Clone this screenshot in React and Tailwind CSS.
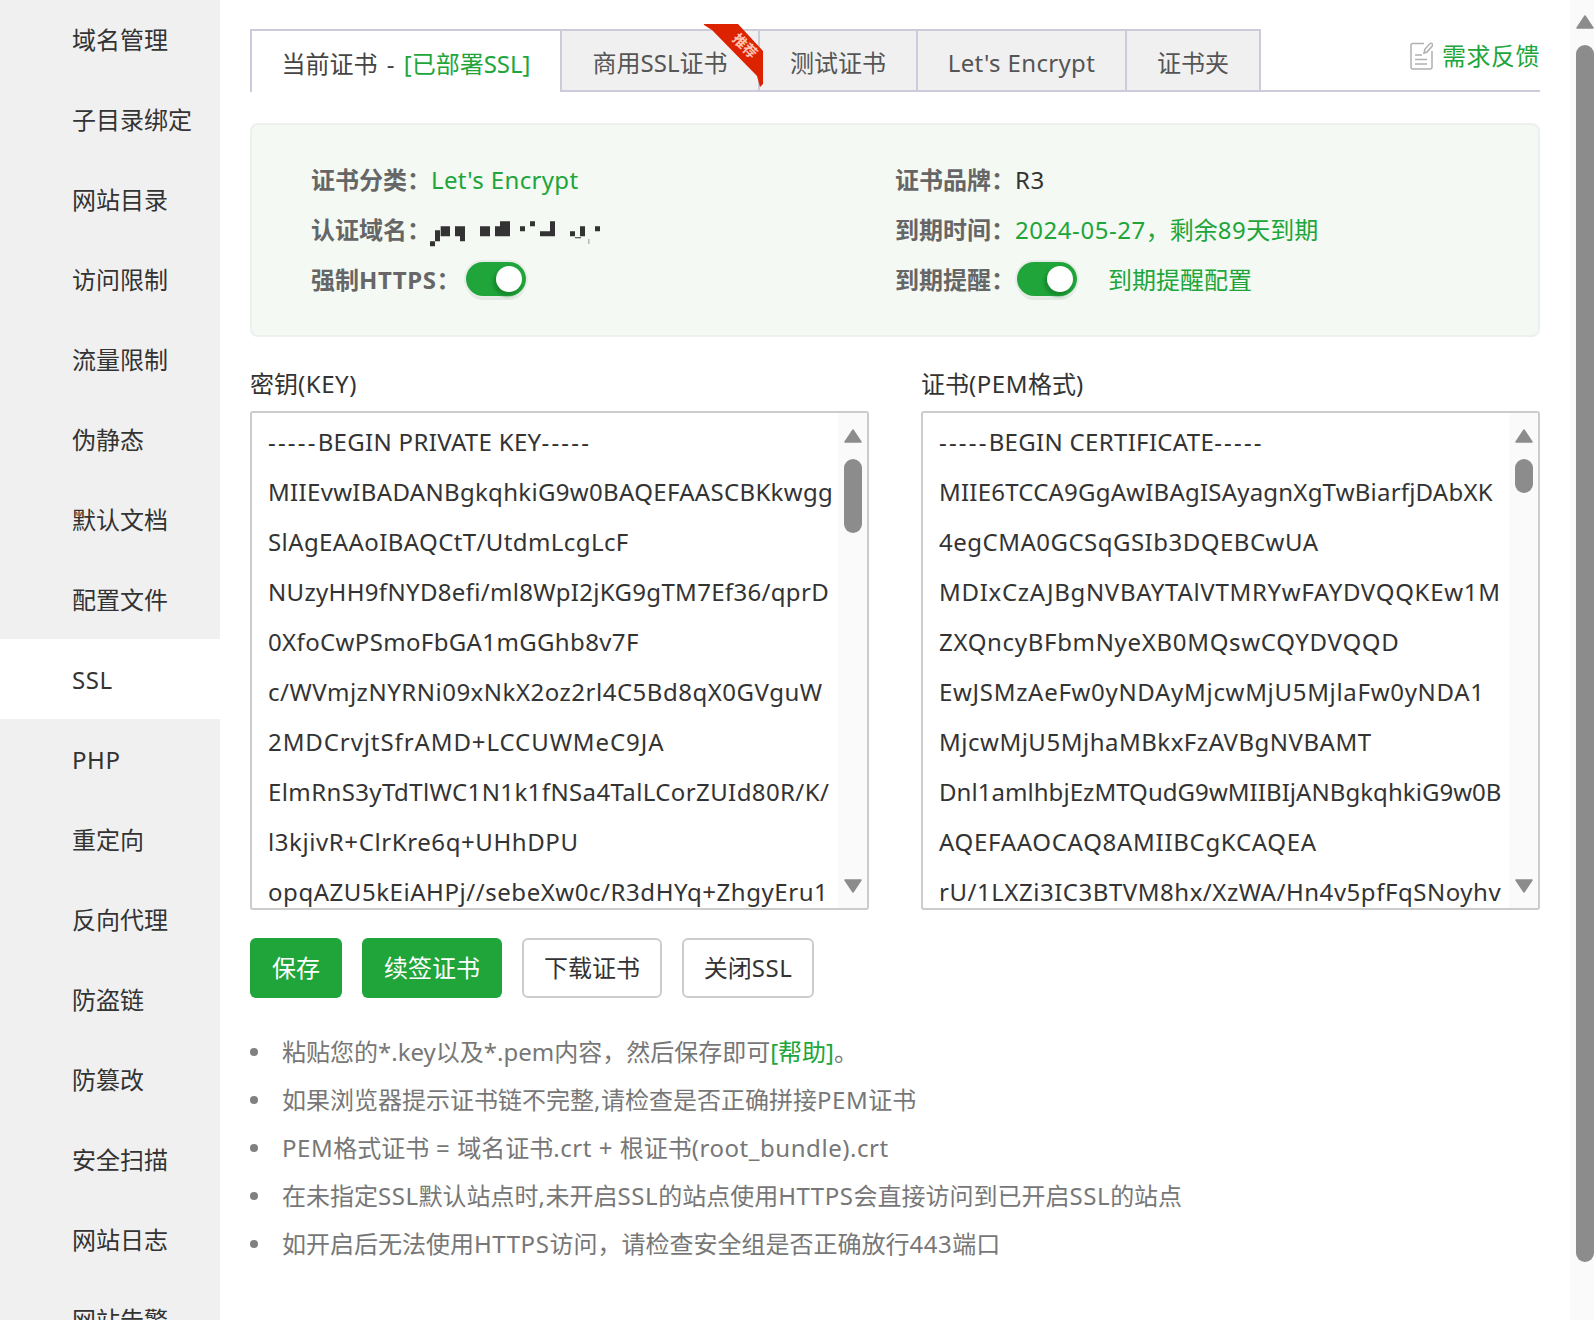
import React from "react";

const side = ["域名管理","子目录绑定","网站目录","访问限制","流量限制","伪静态","默认文档","配置文件","SSL","PHP","重定向","反向代理","防盗链","防篡改","安全扫描","网站日志","网站告警"];
// Each line has its own tracking: the reference's font differs from Noto Sans by glyph, so line widths drift.
const keyLines = [
  ["-----BEGIN PRIVATE KEY-----","tracking-[0.32px]"],
  ["MIIEvwIBADANBgkqhkiG9w0BAQEFAASCBKkwgg","tracking-[0.32px]"],
  ["SlAgEAAoIBAQCtT/UtdmLcgLcF","tracking-[0.4px]"],
  ["NUzyHH9fNYD8efi/ml8WpI2jKG9gTM7Ef36/qprD","tracking-[0.32px]"],
  ["0XfoCwPSmoFbGA1mGGhb8v7F","tracking-[0.36px]"],
  ["c/WVmjzNYRNi09xNkX2oz2rl4C5Bd8qX0GVguW","tracking-[0.51px]"],
  ["2MDCrvjtSfrAMD+LCCUWMeC9JA","tracking-[0.91px]"],
  ["ElmRnS3yTdTlWC1N1k1fNSa4TalLCorZUId80R/K/","tracking-[0.39px]"],
  ["l3kjivR+ClrKre6q+UHhDPU","tracking-[0.59px]"],
  ["opqAZU5kEiAHPj//sebeXw0c/R3dHYq+ZhgyEru1","tracking-[0.55px]"],
];
const pemLines = [
  ["-----BEGIN CERTIFICATE-----","tracking-[0.32px]"],
  ["MIIE6TCCA9GgAwIBAgISAyagnXgTwBiarfjDAbXK","tracking-[0.21px]"],
  ["4egCMA0GCSqGSIb3DQEBCwUA","tracking-[0.49px]"],
  ["MDIxCzAJBgNVBAYTAlVTMRYwFAYDVQQKEw1M","tracking-[0.69px]"],
  ["ZXQncyBFbmNyeXB0MQswCQYDVQQD","tracking-[0.68px]"],
  ["EwJSMzAeFw0yNDAyMjcwMjU5MjlaFw0yNDA1","tracking-[0.69px]"],
  ["MjcwMjU5MjhaMBkxFzAVBgNVBAMT","tracking-[0.51px]"],
  ["Dnl1amlhbjEzMTQudG9wMIIBIjANBgkqhkiG9w0B","tracking-[0.05px]"],
  ["AQEFAAOCAQ8AMIIBCgKCAQEA","tracking-[0.7px]"],
  ["rU/1LXZi3IC3BTVM8hx/XzWA/Hn4v5pfFqSNoyhv","tracking-[0.53px]"],
];

// Latin runs in the reference's font are a little wider than in Noto Sans.
function T({ children }) {
  return children.split(/([\x20-\x7e]+)/).map((part, i) =>
    i % 2 ? <span key={i} className="tracking-[0.55px]">{part}</span> : part
  );
}

function Line({ text, track }) {
  const m = text.match(/^(-----)(.*?)(-----)$/);
  if (!m) return <div className={track}>{text}</div>;
  return (
    <div className={track}>
      <span className="tracking-[2.2px]">{m[1]}</span>
      {m[2]}
      <span className="tracking-[2.2px]">{m[3]}</span>
    </div>
  );
}

function Arrow({ down }) {
  return (
    <svg width="18" height="14" viewBox="0 0 18 14" className="shrink-0">
      <path d={down ? "M1 1H17L9 13Z" : "M9 1L17 13H1Z"} fill="#8c8c8c" stroke="#8c8c8c" strokeWidth="1.5" strokeLinejoin="round" />
    </svg>
  );
}

function Toggle() {
  return (
    <div className="relative mb-[2px] flex h-[34px] w-[60px] shrink-0 items-center justify-end rounded-full bg-[#20a53a] pr-[4px] shadow-[0_0_0_2px_#e8ece8,0_4px_0_0_#e4e8e4]">
      <div className="h-[26px] w-[26px] rounded-full bg-white shadow-[-2px_3px_3px_1px_#188a2e]" />
    </div>
  );
}

function Box({ lines, thumb }) {
  return (
    <div className="flex h-[499px] w-[619px] overflow-hidden rounded-[3px] border-2 border-[#cccccc]">
      <div className="min-w-0 flex-1 overflow-hidden whitespace-nowrap pl-[16px] pt-[4px] text-[24px] leading-[50px] text-[#333333]">
        {lines.map(([l, track]) => <Line key={l} text={l} track={track} />)}
      </div>
      <div className="flex w-[29px] shrink-0 flex-col items-center bg-[#fafafa] pb-[15px] pt-[16px]">
        <Arrow />
        <div className={`mt-[16px] w-[18px] rounded-full bg-[#8c8c8c] ${thumb}`} />
        <div className="mt-auto"><Arrow down /></div>
      </div>
    </div>
  );
}

function Label({ children }) {
  return <span className="w-[120px] shrink-0 font-bold text-[#666666]">{children}</span>;
}

function Dot({ children }) {
  return (
    <li className="flex h-[48px] items-center gap-[24px]">
      <span className="h-[8px] w-[8px] shrink-0 rounded-full bg-[#808080]" />
      <span>{children}</span>
    </li>
  );
}

export default function App() {
  return (
    <div className="flex h-[1320px] w-[1594px] overflow-hidden bg-white font-['Noto_Sans','Noto_Sans_CJK_SC',sans-serif] text-[24px] text-[#333333]">
      <aside className="-mt-px h-[1321px] w-[220px] shrink-0 overflow-hidden bg-[#f0f0f0]">
        {side.map((s) => (
          <div key={s} className={`flex h-[80px] items-center pl-[72px] pt-[2px] ${s === "SSL" ? "bg-white" : ""}`}><T>{s}</T></div>
        ))}
      </aside>

      <main className="w-[1350px] shrink-0 pl-[30px] pt-[29px]">
        <div className="relative flex h-[63px] w-[1290px] items-stretch border-b-2 border-[#cbcbdb]">
          <div className="-mb-[2px] flex h-[63px] w-[312px] items-center justify-center border-x-2 border-t-2 border-[#cbcbdb] bg-white pt-[4px] text-[#444444]">
            当前证书<span className="mx-[3px]">&nbsp;-&nbsp;</span><span className="text-[#20a53a]">[已部署SSL]</span>
          </div>
          {[["商用SSL证书","w-[198px]"],["测试证书","w-[158px]"],["Let's Encrypt","w-[209px]"],["证书夹","w-[134px]"]].map(([t, w]) => (
            <div key={t} className={`flex items-center justify-center border-r-2 border-t-2 border-[#cbcbdb] bg-[#f0f0f0] pt-[4px] text-[#555555] ${w} ${t === "Let's Encrypt" ? "tracking-[0.35px]" : ""}`}>{t}</div>
          ))}
          <div className="ml-auto flex h-[56px] items-center gap-[9px] pb-[2px] tracking-[0.5px] text-[#20a53a]">
            <svg width="23" height="28" viewBox="0 0 23 28" fill="none" stroke="#b0b0b0" strokeWidth="1.5">
              <path d="M14 1.5H3Q1 1.5 1 3.5V25Q1 27 3 27H20Q22 27 22 25V9" />
              <path d="M5 13H12M5 17.5H17M5 22H17" />
              <path d="M14 11L15 7L20 1.5Q21 0.8 22 1.6T22.3 4L17 10Z" />
            </svg>
            需求反馈
          </div>
          <div className="absolute left-[453px] top-[-7px] h-[66px] w-[62px]">
            <svg width="62" height="66" viewBox="0 0 62 66" className="block">
              <path d="M1 3Q0 2 2 2H35L60 29V62L57 65L54 54L9 8Z" fill="#dd2200" />
            </svg>
            <span className="absolute left-[28px] top-[16px] rotate-45 whitespace-nowrap text-[14px] font-bold leading-[16px] text-[#ffc4b5]">推荐</span>
          </div>
        </div>

        <section className="mt-[31px] grid h-[214px] w-[1290px] grid-cols-[584px_1fr] content-start rounded-[8px] border-2 border-[#ecf0ee] bg-[#f4f9f3] pl-[59px] pt-[30px]">
          <div className="flex h-[50px] items-center"><Label>证书分类：</Label><span className="tracking-[0.35px] text-[#20a53a]">Let's Encrypt</span></div>
          <div className="flex h-[50px] items-center"><Label>证书品牌：</Label><T>R3</T></div>
          <div className="flex h-[50px] items-center">
            <Label>认证域名：</Label>
            <svg width="190" height="30" viewBox="0 0 570 90" className="-ml-[11px] mt-[5px]" fill="#333333">
              <path d="M30 70H45V85H30ZM45 37H60V70H45ZM62 25H90V55H62ZM105 25H135V70H120V55H105ZM180 25H210V55H180ZM225 25H240V55H225ZM240 10H270V55H240ZM300 25H315V40H300ZM330 10H345V25H330ZM360 40H405V55H360ZM390 10H405V40H390ZM450 40H465V55H450ZM480 25H495V55H480ZM465 58H483V61H465ZM525 25H540V40H525Z" />
              <path d="M505 63H508V78H505Z" fill="#999999" />
            </svg>
          </div>
          <div className="flex h-[50px] items-center"><Label>到期时间：</Label><span className="text-[#20a53a]"><T>2024-05-27，剩余89天到期</T></span></div>
          <div className="flex h-[50px] items-center"><span className="w-[155px] shrink-0 font-bold text-[#666666]"><T>强制HTTPS：</T></span><Toggle /></div>
          <div className="flex h-[50px] items-center"><Label>到期提醒：</Label><span className="ml-[2px] flex items-center"><Toggle /></span><span className="ml-[31px] text-[#20a53a]">到期提醒配置</span></div>
        </section>

        <div className="mt-[30px] flex w-[1290px] justify-between">
          <div>
            <div className="mb-[10px] h-[34px] leading-[34px]"><T>密钥(KEY)</T></div>
            <Box lines={keyLines} thumb="h-[74px]" />
          </div>
          <div>
            <div className="mb-[10px] h-[34px] leading-[34px]"><T>证书(PEM格式)</T></div>
            <Box lines={pemLines} thumb="h-[34px]" />
          </div>
        </div>

        <div className="mt-[28px] flex gap-[20px]">
          <button className="h-[60px] w-[92px] rounded-[6px] bg-[#20a53a] text-white">保存</button>
          <button className="h-[60px] w-[140px] rounded-[6px] bg-[#20a53a] text-white">续签证书</button>
          <button className="h-[60px] w-[140px] rounded-[6px] border-2 border-[#cccccc] bg-white">下载证书</button>
          <button className="h-[60px] w-[132px] rounded-[6px] border-2 border-[#cccccc] bg-white"><T>关闭SSL</T></button>
        </div>

        <ul className="mt-[30px] text-[#777777]">
          <Dot>粘贴您的*.key以及*.pem内容，然后保存即可<span className="text-[#20a53a]">[帮助]</span>。</Dot>
          <Dot><T>如果浏览器提示证书链不完整,请检查是否正确拼接PEM证书</T></Dot>
          <Dot><T>PEM格式证书 = 域名证书.crt + 根证书(root_bundle).crt</T></Dot>
          <Dot><T>在未指定SSL默认站点时,未开启SSL的站点使用HTTPS会直接访问到已开启SSL的站点</T></Dot>
          <Dot><T>如开启后无法使用HTTPS访问，请检查安全组是否正确放行443端口</T></Dot>
        </ul>
      </main>

      <div className="flex h-[1320px] flex-1 flex-col items-end bg-[#fafafa] pt-[15px]">
        <Arrow />
        <div className="mt-[16px] h-[1217px] w-[18px] rounded-full bg-[#8c8c8c]" />
      </div>
    </div>
  );
}
